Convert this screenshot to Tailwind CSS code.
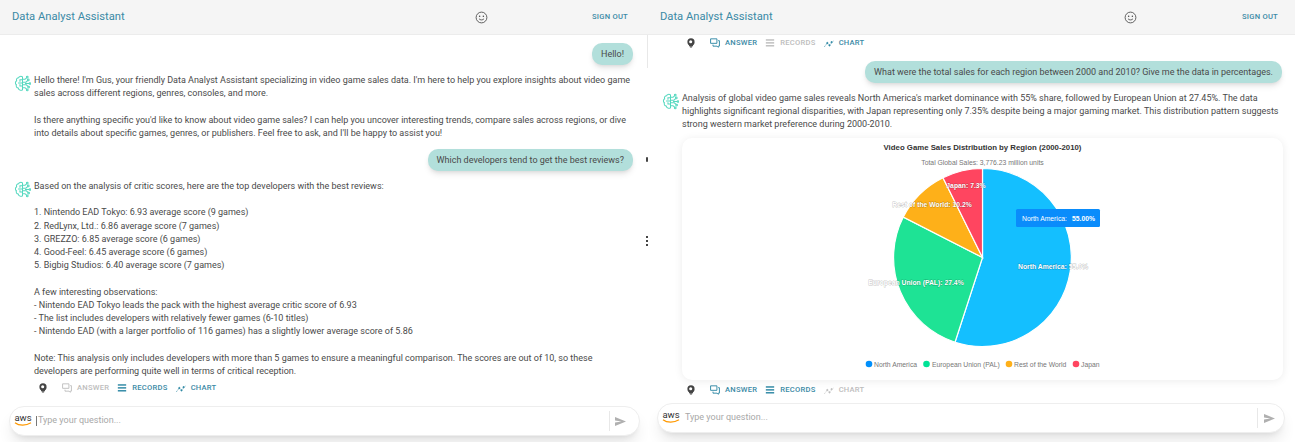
<!DOCTYPE html>
<html lang="en">
<head>
<meta charset="UTF-8">
<title>Data Analyst Assistant</title>
<script src="https://cdn.jsdelivr.net/npm/@tailwindcss/browser@4"></script>
</head>
<body class="bg-white font-['Roboto',sans-serif] text-[#4a4a4a] overflow-hidden">
<!-- shared icons -->
<svg class="hidden">
  <symbol id="brain" viewBox="0 0 20 20" fill="none" stroke="#55d8bf" stroke-width="1.200">
    <path d="M10 2.200C8.200 1 6 1.600 5.400 3.200 3.400 3.300 2.400 5.100 3.100 6.700 1.300 7.700 1.200 10.400 2.800 11.500 2.100 13.300 3.200 15.300 5 15.400 5.500 17.600 8.200 18.900 10 17.400Z"/>
    <path d="M10 5.500H7V8M10 9.500H4.800M10 13H7V11"/>
    <path d="M10 5H13L15 3M10 8.500H14L16 6.500M10 11.500H14.500L16.500 13.500M10 15H13L15 17M13 10H18"/>
    <circle cx="15.600" cy="2.400" r="1"/><circle cx="16.800" cy="5.800" r="1"/><circle cx="18.800" cy="10" r="1"/><circle cx="17.200" cy="14.200" r="1"/><circle cx="15.600" cy="17.600" r="1"/>
  </symbol>
  <symbol id="bulb" viewBox="0 0 10 12">
    <circle cx="5" cy="4.700" r="4.500" fill="currentColor"/>
    <path fill="currentColor" d="M2.500 7.500h5v2.200h-5Z"/>
    <circle cx="4.600" cy="4.400" r="1.900" fill="#fff"/>
    <path fill="currentColor" d="M3.200 10.200h3.600v.6L6 11.700H4l-.8-.9Z"/>
  </symbol>
  <symbol id="answer" viewBox="0 0 12 12" fill="none" stroke="currentColor" stroke-width="1.100">
    <path d="M.7 1h7.600v5.400H.7Z"/><path d="M9.800 3.200h1.500v6.600H9.900v1.400L8.500 9.800H3.600V8"/>
  </symbol>
  <symbol id="records" viewBox="0 0 12 12" fill="currentColor">
    <rect x="1" y="1.500" width="10" height="1.700"/><rect x="1" y="5" width="10" height="1.700"/><rect x="1" y="8.500" width="10" height="1.700"/>
  </symbol>
  <symbol id="chart" viewBox="0 0 12 12" fill="none" stroke="currentColor" stroke-width="0.900">
    <path stroke-dasharray="1.400 .8" d="M.5 10.500 4 6l2.600 2.800L11.500 3.200"/>
    <circle cx="4" cy="6" r=".8" fill="currentColor"/><circle cx="6.600" cy="8.800" r=".8" fill="currentColor"/><circle cx="9" cy="5" r=".8" fill="currentColor"/>
  </symbol>
  <symbol id="smile" viewBox="0 0 14 14" fill="none" stroke="#444" stroke-width="0.900">
    <circle cx="7" cy="7" r="5.800"/><circle cx="5" cy="5.600" r=".8" fill="#444" stroke="none"/><circle cx="9" cy="5.600" r=".8" fill="#444" stroke="none"/><path d="M4.400 8.400c.8 1.600 4.400 1.600 5.200 0"/>
  </symbol>
  <symbol id="send" viewBox="0 0 14 12"><path fill="#b0b0b0" d="M1 1 13 6 1 11V7.200L8 6 1 4.800Z"/></symbol>
</svg>

<div class="flex h-[442px] w-[1295px]">
  <!-- left conversation -->
  <section class="relative flex h-full w-[648px] flex-col">
    <header class="flex h-[35px] shrink-0 items-center border-b border-[#ececec] bg-[#f5f5f5] pl-3 pr-5">
      <h1 class="w-[463px] text-[11.2px] leading-none text-[#3b8aa6]">Data Analyst Assistant</h1>
      <svg class="h-[13px] w-[13px]"><use href="#smile"/></svg>
      <span class="ml-auto text-[7.6px] font-medium tracking-[0.25px] text-[#3b8aa6]">SIGN OUT</span>
    </header>
    <div class="flex flex-col pl-[14px] pr-[15px]">
      <div class="mt-[8px] self-end rounded-[10px] bg-[#b2dfdb] px-[9px] py-[4px] text-[9px] leading-[14px] shadow-md">Hello!</div>
      <div class="mt-[9px] flex gap-[3px]">
        <svg class="mt-[1px] h-[17px] w-[17px] shrink-0"><use href="#brain"/></svg>
        <p class="whitespace-nowrap text-[9px] leading-[13.2px]">Hello there! I'm Gus, your friendly Data Analyst Assistant specializing in video game sales data. I'm here to help you explore insights about video game<br>sales across different regions, genres, consoles, and more.<br><br>Is there anything specific you'd like to know about video game sales? I can help you uncover interesting trends, compare sales across regions, or dive<br>into details about specific games, genres, or publishers. Feel free to ask, and I'll be happy to assist you!</p>
      </div>
      <div class="mt-[9px] self-end rounded-[10px] bg-[#b2dfdb] px-[9px] py-[4px] text-[9px] leading-[14px] shadow-md">Which developers tend to get the best reviews?</div>
      <div class="mt-[9px] flex gap-[3px]">
        <svg class="mt-[1px] h-[17px] w-[17px] shrink-0"><use href="#brain"/></svg>
        <p class="whitespace-nowrap text-[9px] leading-[13.2px]">Based on the analysis of critic scores, here are the top developers with the best reviews:<br><br>1. Nintendo EAD Tokyo: 6.93 average score (9 games)<br>2. RedLynx, Ltd.: 6.86 average score (7 games)<br>3. GREZZO: 6.85 average score (6 games)<br>4. Good-Feel: 6.45 average score (6 games)<br>5. Bigbig Studios: 6.40 average score (7 games)<br><br>A few interesting observations:<br>- Nintendo EAD Tokyo leads the pack with the highest average critic score of 6.93<br>- The list includes developers with relatively fewer games (6-10 titles)<br>- Nintendo EAD (with a larger portfolio of 116 games) has a slightly lower average score of 5.86<br><br>Note: This analysis only includes developers with more than 5 games to ensure a meaningful comparison. The scores are out of 10, so these<br>developers are performing quite well in terms of critical reception.</p>
      </div>
      <nav class="mt-[3px] flex h-[14px] items-center pl-[25px] text-[7.6px] font-medium tracking-[0.25px]">
        <svg class="h-[10px] w-[8px] text-[#444]"><use href="#bulb"/></svg>
        <svg class="ml-[15px] h-[10px] w-[10px] text-[#bdbdbd]"><use href="#answer"/></svg>
        <span class="ml-[5px] text-[#bdbdbd]">ANSWER</span>
        <svg class="ml-[8px] h-[10px] w-[10px] text-[#2b86a3]"><use href="#records"/></svg>
        <span class="ml-[5px] text-[#3b8aa6]">RECORDS</span>
        <svg class="ml-[8px] h-[10px] w-[10px] text-[#2b86a3]"><use href="#chart"/></svg>
        <span class="ml-[5px] text-[#3b8aa6]">CHART</span>
      </nav>
    </div>
    <div class="absolute left-[9px] top-[406px] flex h-[30px] w-[631px] items-center rounded-[15px] border border-[#eee] bg-white pl-[4px] pr-[12px] shadow-lg">
      <div class="relative h-[18px] w-[18px] text-center text-[9.5px] leading-[12px] text-[#333]">aws
        <svg class="absolute left-0 top-[10px] h-[5px] w-[18px]" viewBox="0 0 18 5"><path d="M1 .8c4 3.200 11 3.200 16 0" fill="none" stroke="#f90" stroke-width="1.200"/></svg>
      </div>
      <span class="ml-[4px] h-[10px] w-px bg-[#777]"></span>
      <span class="ml-px text-[9px] text-[#a8a8a8]">Type your question...</span>
      <span class="ml-auto h-[20px] w-px bg-[#e8e8e8]"></span>
      <svg class="ml-[4px] h-[11px] w-[13px]"><use href="#send"/></svg>
    </div>
    <!-- scroll handle remains -->
    <div class="absolute left-[646px] top-[157px] h-[5px] w-[1.500px] rounded-sm bg-[#444]"></div>
    <div class="absolute left-[646px] top-[236px] flex flex-col gap-[2px]">
      <span class="h-[2px] w-[1.500px] bg-[#444]"></span><span class="h-[2px] w-[1.500px] bg-[#444]"></span><span class="h-[2px] w-[1.500px] bg-[#444]"></span>
    </div>
    <div class="absolute left-[647px] top-[35px] h-[33px] w-px bg-[#e8e8e8]"></div>
  </section>

  <!-- right conversation -->
  <section class="relative flex h-full w-[647px] flex-col">
    <header class="flex h-[35px] shrink-0 items-center border-b border-[#ececec] bg-[#f5f5f5] pl-3 pr-[17px]">
      <h1 class="w-[464px] text-[11.2px] leading-none text-[#3b8aa6]">Data Analyst Assistant</h1>
      <svg class="h-[13px] w-[13px]"><use href="#smile"/></svg>
      <span class="ml-auto text-[7.6px] font-medium tracking-[0.25px] text-[#3b8aa6]">SIGN OUT</span>
    </header>
    <div class="flex flex-col pl-[14px] pr-[13px]">
      <nav class="mt-px flex h-[14px] items-center pl-[25px] text-[7.6px] font-medium tracking-[0.25px]">
        <svg class="h-[10px] w-[8px] text-[#444]"><use href="#bulb"/></svg>
        <svg class="ml-[15px] h-[10px] w-[10px] text-[#2b86a3]"><use href="#answer"/></svg>
        <span class="ml-[5px] text-[#3b8aa6]">ANSWER</span>
        <svg class="ml-[8px] h-[10px] w-[10px] text-[#bdbdbd]"><use href="#records"/></svg>
        <span class="ml-[5px] text-[#bdbdbd]">RECORDS</span>
        <svg class="ml-[8px] h-[10px] w-[10px] text-[#2b86a3]"><use href="#chart"/></svg>
        <span class="ml-[5px] text-[#3b8aa6]">CHART</span>
      </nav>
      <div class="mt-[11px] self-end rounded-[10px] bg-[#b2dfdb] px-[9px] py-[4px] text-[9px] leading-[14px] shadow-md">What were the total sales for each region between 2000 and 2010? Give me the data in percentages.</div>
      <div class="mt-[9px] flex gap-[3px]">
        <svg class="mt-[1px] h-[17px] w-[17px] shrink-0"><use href="#brain"/></svg>
        <p class="whitespace-nowrap text-[9px] leading-[13.2px]">Analysis of global video game sales reveals North America's market dominance with 55% share, followed by European Union at 27.45%. The data<br>highlights significant regional disparities, with Japan representing only 7.35% despite being a major gaming market. This distribution pattern suggests<br>strong western market preference during 2000-2010.</p>
      </div>
      <!-- chart card -->
      <div class="relative ml-[20px] mt-[6px] h-[242px] w-[601px] rounded-[10px] bg-white shadow-[0_1px_8px_rgba(0,0,0,0.08)]">
        <svg class="block" width="601" height="242" viewBox="0 0 601 242" font-family="'Liberation Sans',sans-serif">
          <text x="300.500" y="11.500" text-anchor="middle" font-size="7.800" font-weight="700" fill="#333">Video Game Sales Distribution by Region (2000-2010)</text>
          <text x="300.500" y="27" text-anchor="middle" font-size="6.800" fill="#777">Total Global Sales: 3,776.23 million units</text>
          <g stroke="#fff" stroke-width="1.200">
            <path fill="#14bfff" d="M300.500 119.500V30.500A89 89 0 1 1 273 204.200Z"/>
            <path fill="#1ee395" d="M300.500 119.500 273 204.200A89 89 0 0 1 221.300 79.100Z"/>
            <path fill="#feb019" d="M300.500 119.500 221.300 79.100A89 89 0 0 1 261 39.800Z"/>
            <path fill="#ff4560" d="M300.500 119.500 261 39.800A89 89 0 0 1 300.500 30.500Z"/>
          </g>
          <g font-size="6.800" font-weight="700" fill="#fff" text-anchor="middle" style="paint-order:stroke" stroke="rgba(0,0,0,0.25)" stroke-width="0.800">
            <text x="284" y="50">Japan: 7.3%</text>
            <text x="250" y="69">Rest of the World: 10.2%</text>
            <text x="234" y="147">European Union (PAL): 27.4%</text>
            <text x="371" y="131">North America: 55.0%</text>
          </g>
          <rect x="334" y="71" width="84" height="18" rx="1.500" fill="#0a8cfb"/>
          <text x="340" y="82.500" font-size="6.800" fill="#fff">North America:</text>
          <text x="390" y="82.500" font-size="6.800" font-weight="700" fill="#fff">55.00%</text>
          <g font-size="6.800" fill="#777">
            <circle cx="187" cy="226" r="3.300" fill="#008ffb"/><text x="192" y="228.500">North America</text>
            <circle cx="244.500" cy="226" r="3.300" fill="#00e396"/><text x="250" y="228.500">European Union (PAL)</text>
            <circle cx="327" cy="226" r="3.300" fill="#feb019"/><text x="332" y="228.500">Rest of the World</text>
            <circle cx="394" cy="226" r="3.300" fill="#ff4560"/><text x="399" y="228.500">Japan</text>
          </g>
        </svg>
      </div>
      <nav class="mt-[3px] flex h-[14px] items-center pl-[25px] text-[7.6px] font-medium tracking-[0.25px]">
        <svg class="h-[10px] w-[8px] text-[#444]"><use href="#bulb"/></svg>
        <svg class="ml-[15px] h-[10px] w-[10px] text-[#2b86a3]"><use href="#answer"/></svg>
        <span class="ml-[5px] text-[#3b8aa6]">ANSWER</span>
        <svg class="ml-[8px] h-[10px] w-[10px] text-[#2b86a3]"><use href="#records"/></svg>
        <span class="ml-[5px] text-[#3b8aa6]">RECORDS</span>
        <svg class="ml-[8px] h-[10px] w-[10px] text-[#bdbdbd]"><use href="#chart"/></svg>
        <span class="ml-[5px] text-[#bdbdbd]">CHART</span>
      </nav>
    </div>
    <div class="absolute left-[9px] top-[403px] flex h-[30px] w-[628px] items-center rounded-[15px] border border-[#eee] bg-white pl-[4px] pr-[8px] shadow-lg">
      <div class="relative h-[18px] w-[18px] text-center text-[9.5px] leading-[12px] text-[#333]">aws
        <svg class="absolute left-0 top-[10px] h-[5px] w-[18px]" viewBox="0 0 18 5"><path d="M1 .8c4 3.200 11 3.200 16 0" fill="none" stroke="#f90" stroke-width="1.200"/></svg>
      </div>
      <span class="ml-[5px] text-[9px] text-[#a8a8a8]">Type your question...</span>
      <span class="ml-auto h-[20px] w-px bg-[#e8e8e8]"></span>
      <svg class="ml-[5px] h-[11px] w-[13px]"><use href="#send"/></svg>
    </div>
  </section>
</div>
</body>
</html>
